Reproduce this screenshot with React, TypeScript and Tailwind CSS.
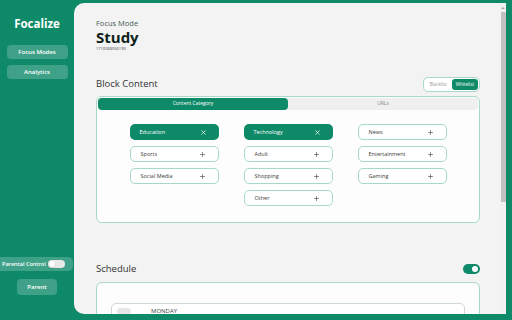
import { Plus, X } from "lucide-react";

const green = "bg-[#0f8a69]";

type Chip = { name: string; active?: boolean };

const columns: Chip[][] = [
  [{ name: "Education", active: true }, { name: "Sports" }, { name: "Social Media" }],
  [{ name: "Technology", active: true }, { name: "Adult" }, { name: "Shopping" }, { name: "Other" }],
  [{ name: "News" }, { name: "Entertainment" }, { name: "Gaming" }],
];

function CategoryChip({ chip }: { chip: Chip }) {
  return (
    <div
      className={`flex h-[16px] w-[89px] items-center justify-between rounded-[5px] pl-[10px] pr-[12px] text-[5.5px] ${
        chip.active
          ? "bg-[#0f8a69] text-white"
          : "border border-[#a9d8c8] bg-white text-[#3c3c3c]"
      }`}
    >
      <span>{chip.name}</span>
      {chip.active ? (
        <X className="h-[7px] w-[7px]" strokeWidth={2.5} />
      ) : (
        <Plus className="h-[7px] w-[7px]" strokeWidth={2} />
      )}
    </div>
  );
}

export default function App() {
  return (
    <div
      className={`flex h-[320px] w-[512px] overflow-hidden ${green}`}
      style={{ fontFamily: '"Open Sans", "Noto Sans", sans-serif' }}
    >
      {/* Sidebar */}
      <div className="flex w-[74px] shrink-0 flex-col">
        <div className="mt-[15px] text-center text-[11.5px] font-bold text-white">Focalize</div>
        <div className="mt-[13px] flex flex-col items-center gap-[6px]">
          <button className="h-[14px] w-[61px] rounded-[4px] bg-white/20 text-[6px] font-semibold text-white">
            Focus Modes
          </button>
          <button className="h-[14px] w-[61px] rounded-[4px] bg-white/20 text-[6px] font-semibold text-white">
            Analytics
          </button>
        </div>
        <div className="mt-auto mb-[25px] flex flex-col items-center">
          <div className="flex h-[14px] w-[73px] items-center justify-between self-start rounded-r-[5px] bg-white/20 pl-[2px] pr-[8px]">
            <span className="text-[5.5px] font-semibold text-white">Parental Control</span>
            <div className="h-[8px] w-[17px] rounded-full bg-[#e8e8e8] p-[1px]">
              <div className="h-[6px] w-[6px] rounded-full bg-white shadow" />
            </div>
          </div>
          <button className="mt-[8px] h-[16px] w-[40px] rounded-[4px] bg-white/20 text-[6px] font-semibold text-white">
            Parent
          </button>
        </div>
      </div>

      {/* Main panel */}
      <div className="mt-[3px] mb-[6px] mr-[6px] flex flex-1 overflow-hidden rounded-l-[10px] bg-[#f2f3f2]">
        <div className="flex-1 overflow-hidden pl-[22px] pr-[20px]">
          <div className="mt-[16px] text-[7.5px] leading-[9px] text-[#4a5a56]">Focus Mode</div>
          <div className="mt-[1px] text-[15px] font-bold leading-[16px] text-[#0d1f1b]">Study</div>
          <div className="mt-[1px] text-[4px] leading-[5px] text-[#444]">1710068056190</div>

          <div className="mt-[26px] flex items-center justify-between">
            <span className="text-[9.5px] text-[#333]">Block Content</span>
            <div className="flex h-[15px] items-center rounded-[5px] border border-[#a9d8c8] bg-white p-[1px]">
              <span className="px-[5px] text-[4.5px] text-[#999]">Blacklist</span>
              <span className="flex h-[11px] items-center rounded-[3px] bg-[#0f8a69] px-[4px] text-[4.5px] text-white">
                Whitelist
              </span>
            </div>
          </div>

          <div className="mt-[4px] h-[127px] rounded-[6px] border border-[#a9d8c8] bg-[#fcfdfc] p-[1px]">
            <div className="flex h-[12px] rounded-[4px] bg-[#eeefee]">
              <div className="flex flex-1 items-center justify-center rounded-[4px] bg-[#0f8a69] text-[5px] text-white">
                Content Category
              </div>
              <div className="flex flex-1 items-center justify-center text-[5px] text-[#888]">URLs</div>
            </div>
            <div className="mt-[14px] flex justify-center gap-[25px]">
              {columns.map((col, i) => (
                <div key={i} className="flex flex-col gap-[6px]">
                  {col.map((chip) => (
                    <CategoryChip key={chip.name} chip={chip} />
                  ))}
                </div>
              ))}
            </div>
          </div>

          <div className="mt-[39px] flex items-center justify-between">
            <span className="text-[9.5px] text-[#333]">Schedule</span>
            <div className="flex h-[10px] w-[17px] items-center justify-end rounded-full bg-[#0f8a69] p-[2px]">
              <div className="h-[6px] w-[6px] rounded-full bg-white" />
            </div>
          </div>

          <div className="mt-[6px] h-[60px] rounded-[6px] border border-[#a9d8c8] bg-[#fcfdfc] px-[14px] pt-[20px]">
            <div className="flex h-[30px] items-start gap-[20px] rounded-[5px] border border-[#cfd9d5] bg-white px-[5px] pt-[4px]">
              <div className="h-[7px] w-[14px] rounded-full bg-[#e6e6e6]" />
              <span className="text-[6px] leading-[7px] text-[#444]">MONDAY</span>
            </div>
          </div>
        </div>

        {/* Scrollbar */}
        <div className="flex w-[6px] shrink-0 flex-col items-center bg-[#f1f1f1]">
          <div className="mt-[4px] h-0 w-0 border-x-[2px] border-b-[2px] border-x-transparent border-b-[#a3a3a3]" />
          <div className="mt-[3px] h-[190px] w-[5px] bg-[#c1c1c1]" />
        </div>
      </div>
    </div>
  );
}
